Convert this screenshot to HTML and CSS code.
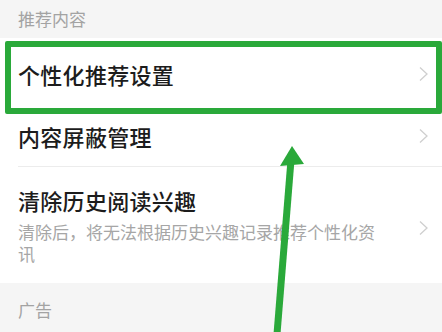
FILE: index.html
```html
<!DOCTYPE html>
<html lang="zh">
<head>
<meta charset="utf-8">
<link rel="stylesheet" href="styles.css">
</head>
<body>
<div class="screen">
  <div class="section-head">推荐内容</div>
  <div class="list">
    <div class="row row-first">
      <div class="row-text"><div class="title">个性化推荐设置</div></div>
      <svg class="chev" viewBox="0 0 10 16"><path d="M1.5 1.5 L8.5 8 L1.5 14.5" /></svg>
    </div>
    <div class="row row-second">
      <div class="row-text"><div class="title">内容屏蔽管理</div></div>
      <svg class="chev" viewBox="0 0 10 16"><path d="M1.5 1.5 L8.5 8 L1.5 14.5" /></svg>
    </div>
    <div class="row row-third">
      <div class="row-text">
        <div class="title">清除历史阅读兴趣</div>
        <div class="sub">清除后，将无法根据历史兴趣记录推荐个性化资讯</div>
      </div>
      <svg class="chev" viewBox="0 0 10 16"><path d="M1.5 1.5 L8.5 8 L1.5 14.5" /></svg>
    </div>
  </div>
  <div class="section-head ad">广告</div>

  <div class="highlight"></div>
  <svg class="arrow" viewBox="0 0 442 332" width="442" height="332">
    <line x1="291" y1="160" x2="277" y2="334" />
    <polygon points="292,146 280,166 304,164" />
  </svg>
</div>
</body>
</html>
```
FILE: styles.css
```css
html, body {
  margin: 0;
  padding: 0;
  background: #f5f5f5;
}
.screen {
  position: relative;
  width: 442px;
  height: 332px;
  overflow: hidden;
  font-family: "Noto Sans CJK SC", "Noto Sans", sans-serif;
  background: #f5f5f5;
}
.section-head {
  height: 38px;
  box-sizing: border-box;
  padding-left: 18px;
  padding-top: 7px;
  font-size: 17px;
  line-height: 24px;
  color: #a3a3a3;
  background: #f5f5f5;
}
.section-head.ad {
  height: 49px;
  padding-top: 15px;
}
.list {
  background: #ffffff;
}
.row {
  display: flex;
  align-items: center;
  padding-left: 18px;
  padding-right: 13px;
  box-sizing: border-box;
}
.row-first {
  height: 76px;
  padding-bottom: 5px;
}
.row-second {
  height: 53px;
  padding-bottom: 10px;
  position: relative;
}
.row-second::after {
  content: "";
  position: absolute;
  left: 18px;
  right: 0;
  bottom: 0;
  height: 1px;
  background: #ececec;
}
.row-third {
  height: 116px;
  padding-top: 20px;
  padding-bottom: 16px;
  align-items: flex-start;
}
.row-third .chev {
  margin-top: 33px;
}
.row-text {
  flex: 1;
}
.title {
  font-size: 22px;
  line-height: 26px;
  font-weight: 500;
  color: #1c1c1c;
  letter-spacing: 0.3px;
}
.sub {
  margin-top: 8px;
  max-width: 362px;
  font-size: 17px;
  line-height: 22px;
  color: #a6a6a6;
}
.chev {
  width: 11px;
  height: 16px;
  fill: none;
  stroke: #cfcfcf;
  stroke-width: 1.3;
  flex: none;
}
.highlight {
  position: absolute;
  left: 5px;
  top: 41px;
  width: 437px;
  height: 73px;
  box-sizing: border-box;
  border: 6px solid #2aa93a;
  border-radius: 2px;
}
.arrow {
  position: absolute;
  left: 0;
  top: 0;
}
.arrow line {
  stroke: #2aa93a;
  stroke-width: 7;
}
.arrow polygon {
  fill: #2aa93a;
}
```
